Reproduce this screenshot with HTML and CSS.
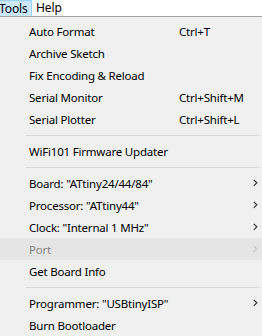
FILE: index.html
```html
<!DOCTYPE html>
<html>
<head>
<meta charset="utf-8">
<link rel="stylesheet" href="styles.css">
</head>
<body>
<div class="menubar">
  <div class="mb-item active">Tools</div>
  <div class="mb-item">Help</div>
</div>
<div class="menu">
  <div class="item"><span class="label">Auto Format</span><span class="key">Ctrl+T</span></div>
  <div class="item"><span class="label">Archive Sketch</span></div>
  <div class="item"><span class="label">Fix Encoding &amp; Reload</span></div>
  <div class="item"><span class="label">Serial Monitor</span><span class="key">Ctrl+Shift+M</span></div>
  <div class="item"><span class="label">Serial Plotter</span><span class="key">Ctrl+Shift+L</span></div>
  <div class="sep"></div>
  <div class="item"><span class="label">WiFi101 Firmware Updater</span></div>
  <div class="sep"></div>
  <div class="item"><span class="label">Board: "ATtiny24/44/84"</span><span class="arrow"><svg width="5" height="8" viewBox="0 0 5 8"><path d="M0.8 0.8 L3.8 3.8 L0.8 6.8" fill="none" stroke="#333" stroke-width="1.2"/></svg></span></div>
  <div class="item"><span class="label">Processor: "ATtiny44"</span><span class="arrow"><svg width="5" height="8" viewBox="0 0 5 8"><path d="M0.8 0.8 L3.8 3.8 L0.8 6.8" fill="none" stroke="#333" stroke-width="1.2"/></svg></span></div>
  <div class="item"><span class="label">Clock: "Internal 1 MHz"</span><span class="arrow"><svg width="5" height="8" viewBox="0 0 5 8"><path d="M0.8 0.8 L3.8 3.8 L0.8 6.8" fill="none" stroke="#333" stroke-width="1.2"/></svg></span></div>
  <div class="item disabled hover"><span class="label">Port</span><span class="arrow"><svg width="5" height="8" viewBox="0 0 5 8"><path d="M0.8 0.8 L3.8 3.8 L0.8 6.8" fill="none" stroke="#c4c4c4" stroke-width="1.2"/></svg></span></div>
  <div class="item"><span class="label">Get Board Info</span></div>
  <div class="sep"></div>
  <div class="item"><span class="label">Programmer: "USBtinyISP"</span><span class="arrow"><svg width="5" height="8" viewBox="0 0 5 8"><path d="M0.8 0.8 L3.8 3.8 L0.8 6.8" fill="none" stroke="#333" stroke-width="1.2"/></svg></span></div>
  <div class="item"><span class="label">Burn Bootloader</span></div>
</div>
</body>
</html>
```
FILE: styles.css
```css
html, body {
  margin: 0;
  padding: 0;
  background: #ffffff;
}
body {
  width: 262px;
  height: 336px;
  overflow: hidden;
  font-family: "Noto Sans", "Open Sans", sans-serif;
  font-size: 11.5px;
  letter-spacing: -0.2px;
  color: #000;
}
.menubar {
  display: flex;
  height: 16px;
  background: #ffffff;
  font-size: 12px;
  letter-spacing: -0.1px;
}
.mb-item {
  height: 16px;
  line-height: 15px;
  box-sizing: border-box;
  padding: 0 5px 0 2px;
}
.mb-item.active {
  width: 32px;
  padding-left: 0;
  background: #cce8ff;
  border: 1px solid #99d1ff;
  border-bottom: none;
  border-left: none;
  text-indent: -1px;
}
.mb-item + .mb-item {
  padding-left: 4px;
}
.menu {
  background: #f0f0f0;
  border-top: 1px solid #a0a0a0;
  padding-top: 3px;
  height: 319px;
  box-sizing: content-box;
}
.item {
  display: grid;
  grid-template-columns: 29px 150px 1fr 12px;
  height: 22px;
  align-items: center;
  white-space: nowrap;
}
.item .label {
  grid-column: 2;
}
.item .key {
  grid-column: 3;
}
.item .arrow {
  grid-column: 4;
  display: flex;
  align-items: center;
  padding-left: 3px;
}
.item.hover {
  background: #e5e5e5;
}
.item.disabled {
  color: #858585;
}
.sep {
  height: 10px;
  display: flex;
  align-items: center;
  margin-left: 26px;
  margin-right: 3px;
}
.sep::before {
  content: "";
  flex: 1;
  height: 1px;
  background: #d7d7d7;
}
```
